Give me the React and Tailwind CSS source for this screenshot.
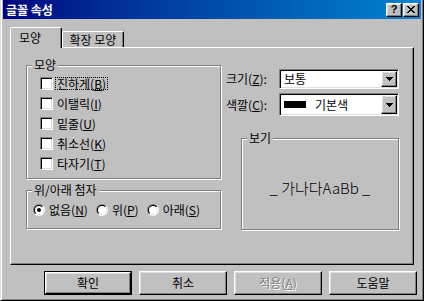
import React from 'react';

// Win98 bevels
const raised =
  'border border-t-white border-l-white border-r-black border-b-black shadow-[inset_-1px_-1px_0_#808080,inset_1px_1px_0_#dfdfdf]';
const sunken =
  'border border-t-[#808080] border-l-[#808080] border-r-white border-b-white shadow-[inset_1px_1px_0_#000,inset_-1px_-1px_0_#dfdfdf]';

const Mn = ({ children }) => <span className="underline underline-offset-[1px]">{children}</span>;

const GroupBox = ({ title, className = '', children }) => (
  <div className={`relative border border-[#808080] shadow-[inset_1px_1px_0_#fff,1px_1px_0_#fff] ${className}`}>
    <span className="absolute left-[5px] -top-[8px] bg-[#c0c0c0] px-[2px] text-[12px] leading-[14px]">{title}</span>
    {children}
  </div>
);

const Checkbox = ({ label, focused }) => (
  <div className="flex items-center h-[13px]">
    <div className={`w-[13px] h-[13px] bg-white ${sunken}`} />
    <span
      className={`ml-[2px] px-[1px] h-[13px] leading-[11px] text-[12px] border ${
        focused ? 'border-dotted border-black' : 'border-transparent'
      }`}
    >
      {label}
    </span>
  </div>
);

const Radio = ({ checked }) => (
  <svg width="12" height="12" viewBox="0 0 12 12" className="shrink-0">
    <defs>
      <linearGradient id="r-outer" x1="0" y1="0" x2="1" y2="1">
        <stop offset="0.5" stopColor="#808080" />
        <stop offset="0.5" stopColor="#ffffff" />
      </linearGradient>
      <linearGradient id="r-inner" x1="0" y1="0" x2="1" y2="1">
        <stop offset="0.5" stopColor="#000000" />
        <stop offset="0.5" stopColor="#dfdfdf" />
      </linearGradient>
    </defs>
    <circle cx="6" cy="6" r="6" fill="url(#r-outer)" />
    <circle cx="6" cy="6" r="5" fill="url(#r-inner)" />
    <circle cx="6" cy="6" r="4" fill="#fff" />
    {checked && <circle cx="6" cy="6" r="2" fill="#000" />}
  </svg>
);

const RadioItem = ({ checked, children }) => (
  <div className="flex items-center">
    <Radio checked={checked} />
    <span className="ml-[4px] text-[12px] leading-[14px]">{children}</span>
  </div>
);

const ComboBox = ({ height, children }) => (
  <div className={`flex w-[120px] bg-white ${sunken} p-[1px]`} style={{ height }}>
    <div className="flex-1 flex items-center pl-[3px] text-[12px] leading-[14px]">{children}</div>
    <div className={`w-[16px] h-full bg-[#c0c0c0] flex items-center justify-center ${raised}`}>
      <svg width="7" height="4" viewBox="0 0 7 4" shapeRendering="crispEdges">
        <path d="M0 0h7v1h-1v1h-1v1h-1v1h-1v-1h-1v-1h-1v-1h-1z" fill="#000" />
      </svg>
    </div>
  </div>
);

const DialogButton = ({ children, isDefault, disabled }) => {
  const inner = (
    <div
      className={`w-full h-full flex items-center justify-center text-[12px] leading-[14px] ${raised} ${
        disabled ? 'text-[#808080] [text-shadow:1px_1px_0_#fff]' : 'text-black'
      }`}
    >
      {children}
    </div>
  );
  return (
    <div className={`w-[88px] h-[24px] ${isDefault ? 'border border-black' : ''}`}>{inner}</div>
  );
};

const App = () => {
  return (
    <div className="w-[424px] h-[301px] bg-[#c0c0c0] border-l border-r border-b border-l-[#dfdfdf] border-r-black border-b-black shadow-[inset_1px_0_0_#fff,inset_-1px_-1px_0_#808080] px-[2px] pb-[2px] font-['Noto_Sans_CJK_KR',sans-serif] text-black overflow-hidden">
      {/* Title bar */}
      <div className="h-[19px] bg-linear-to-r from-[#000080] to-[#1084d0] flex items-center pl-[3px] pr-[2px]">
        <span className="text-white font-bold text-[12px] leading-[14px]">글꼴 속성</span>
        <div className="ml-auto flex gap-[1px]">
          <div className={`w-[16px] h-[14px] bg-[#c0c0c0] flex items-center justify-center ${raised}`}>
            <span className="font-['Liberation_Sans',sans-serif] font-bold text-[11px] leading-[11px]">?</span>
          </div>
          <div className={`w-[16px] h-[14px] bg-[#c0c0c0] flex items-center justify-center ${raised}`}>
            <svg width="8" height="7" viewBox="0 0 8 7" shapeRendering="crispEdges">
              <path d="M0 0h2v1h1v1h2v-1h1v-1h2v1h-1v1h-1v1h-1v1h1v1h1v1h1v1h-2v-1h-1v-1h-2v1h-1v1h-2v-1h1v-1h1v-1h1v-1h-1v-1h-1v-1h-1z" fill="#000" />
            </svg>
          </div>
        </div>
      </div>

      {/* Tabs */}
      <div className="ml-[7px] mt-[8px] flex items-end h-[20px]">
        <div className="relative z-10 -mb-px h-[21px] w-[52px] bg-[#c0c0c0] border-t border-l border-r border-t-white border-l-white border-r-black shadow-[inset_-1px_0_0_#808080] rounded-t-[2px] pl-[8px] flex items-center text-[12px] leading-[14px]">
          모양
        </div>
        <div className="h-[16px] w-[62px] bg-[#c0c0c0] border-t border-l border-r border-t-white border-l-white border-r-black shadow-[inset_-1px_0_0_#808080] rounded-t-[2px] flex items-center justify-center text-[12px] leading-[14px]">
          확장 모양
        </div>
      </div>

      {/* Tab panel */}
      <div className="ml-[7px] w-[404px] h-[218px] border border-t-white border-l-white border-r-black border-b-black shadow-[inset_-1px_-1px_0_#808080] flex">
        {/* left column */}
        <div className="ml-[15px] mt-[17px] w-[195px] flex flex-col gap-[11px]">
          <GroupBox title="모양" className="h-[114px] pl-[13px] pt-[11px]">
            <div className="flex flex-col gap-[7px]">
              <Checkbox focused label={<>진하게(<Mn>B</Mn>)</>} />
              <Checkbox label={<>이탤릭(<Mn>I</Mn>)</>} />
              <Checkbox label={<>밑줄(<Mn>U</Mn>)</>} />
              <Checkbox label={<>취소선(<Mn>K</Mn>)</>} />
              <Checkbox label={<>타자기(<Mn>T</Mn>)</>} />
            </div>
          </GroupBox>
          <GroupBox title="위/아래 첨자" className="h-[39px] pl-[6px] pt-[12px]">
            <div className="flex items-center gap-[8px]">
              <RadioItem checked>
                없음(<Mn>N</Mn>)
              </RadioItem>
              <RadioItem>
                위(<Mn>P</Mn>)
              </RadioItem>
              <RadioItem>
                아래(<Mn>S</Mn>)
              </RadioItem>
            </div>
          </GroupBox>
        </div>

        {/* right column */}
        <div className="ml-[5px] mt-[21px] flex flex-col">
          <div className="flex items-center">
            <span className="w-[53px] text-[12px] leading-[14px]">
              크기(<Mn>Z</Mn>):
            </span>
            <ComboBox height={20}>보통</ComboBox>
          </div>
          <div className="flex items-center mt-[4px]">
            <span className="w-[53px] text-[12px] leading-[14px]">
              색깔(<Mn>C</Mn>):
            </span>
            <ComboBox height={23}>
              <div className="w-[22px] h-[7px] bg-black" />
              <span className="ml-[9px]">기본색</span>
            </ComboBox>
          </div>
          <GroupBox title="보기" className="ml-[15px] mt-[22px] w-[158px] h-[92px] flex items-center justify-center pt-[8px]">
            <span className="text-[15px] leading-[18px] font-light whitespace-pre">_ 가나다AaBb _</span>
          </GroupBox>
        </div>
      </div>

      {/* Buttons */}
      <div className="mt-[6px] flex justify-end gap-[7px] pr-[4px]">
        <DialogButton isDefault>확인</DialogButton>
        <DialogButton>취소</DialogButton>
        <DialogButton disabled>
          적용(<Mn>A</Mn>)
        </DialogButton>
        <DialogButton>도움말</DialogButton>
      </div>
    </div>
  );
};

export default App;
